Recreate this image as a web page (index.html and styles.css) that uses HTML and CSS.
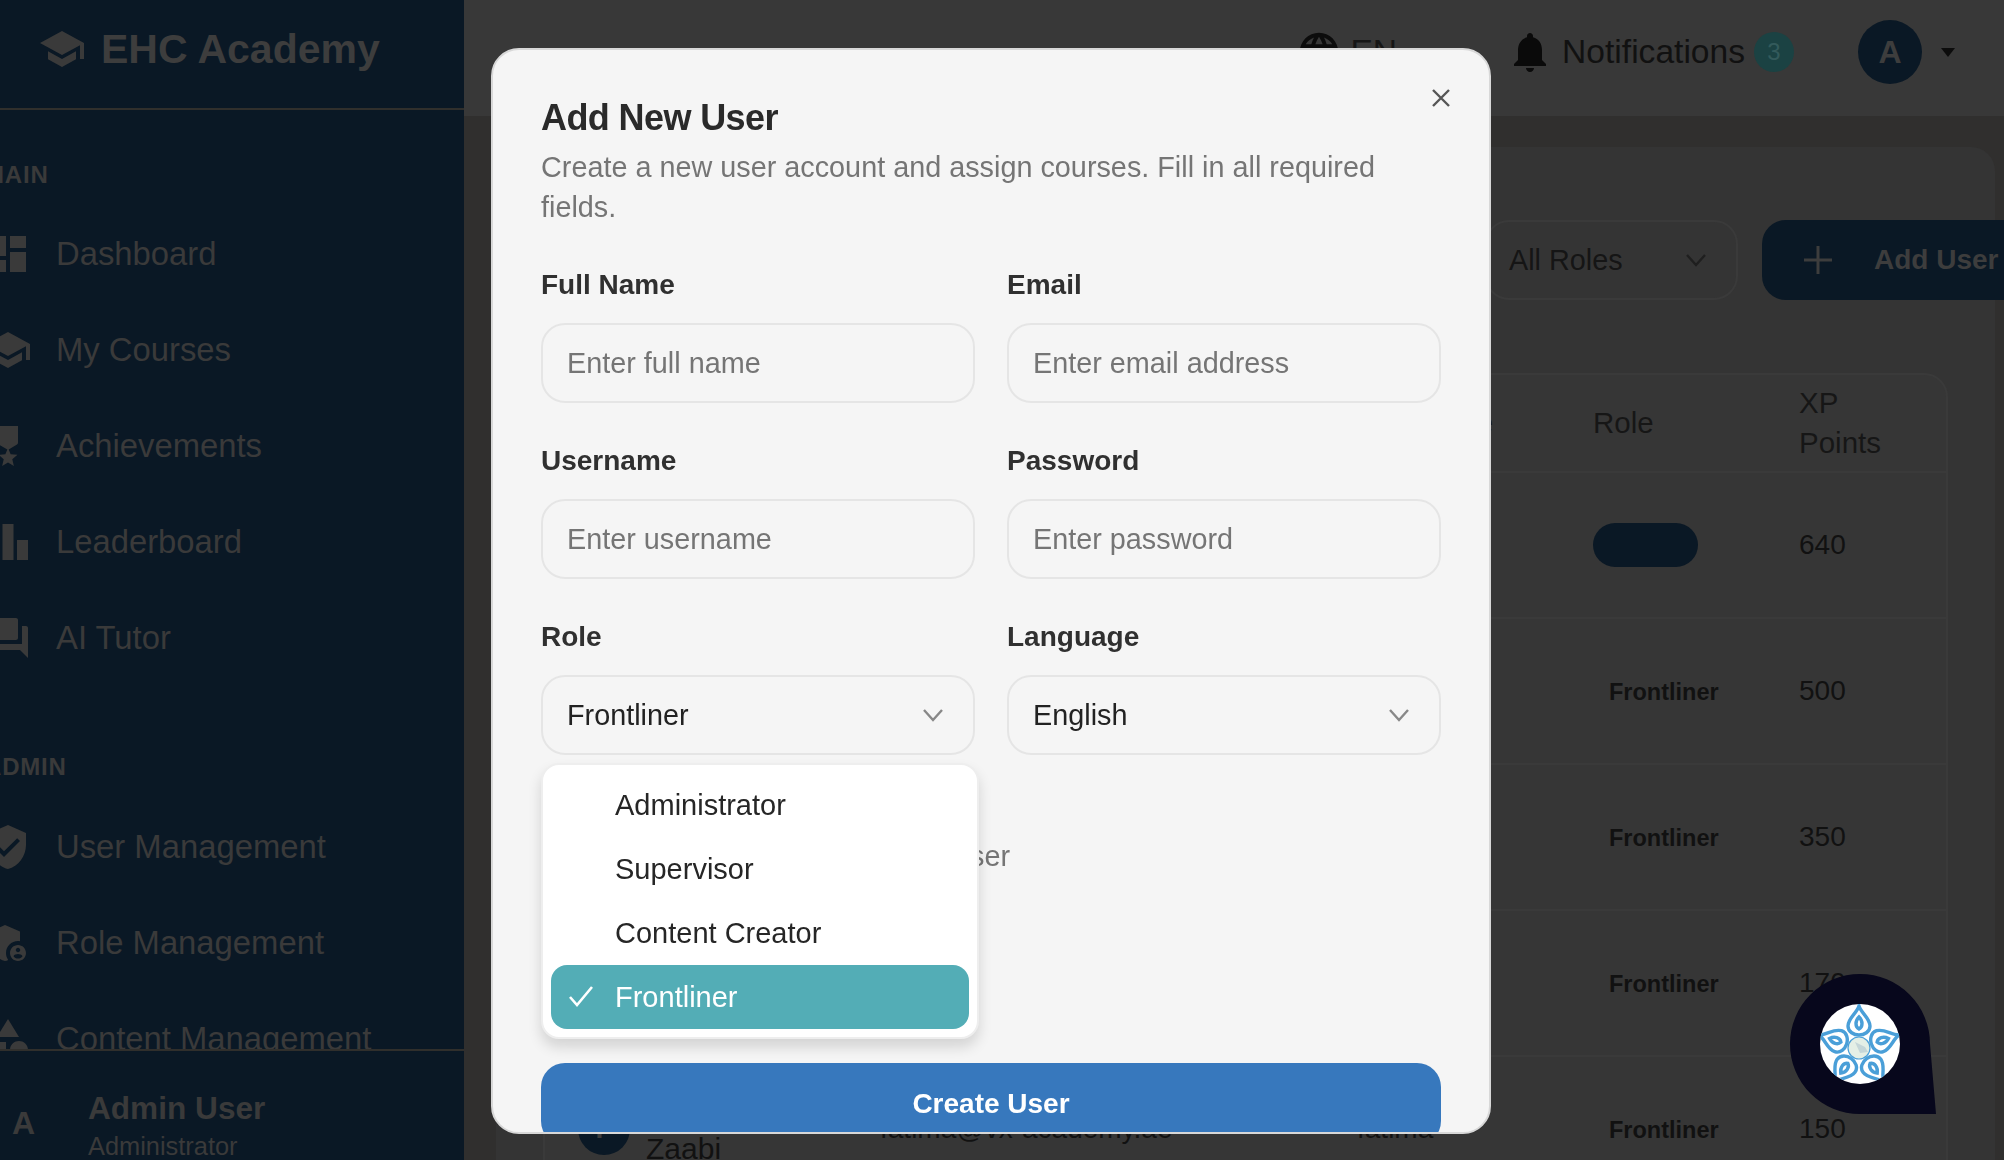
FILE: index.html
```html
<!DOCTYPE html>
<html lang="en">
<head>
<meta charset="UTF-8">
<title>EHC Academy - User Management</title>
<link rel="stylesheet" href="styles.css">
</head>
<body>
<div class="app">
    <aside class="sidebar">
        <div class="brand">
            <svg class="brand-icon" viewBox="0 0 24 24"><path d="M5 13.18v4L12 21l7-3.82v-4L12 17l-7-3.82zM12 3L1 9l11 6 9-4.91V17h2V9L12 3z"/></svg>
            <span>EHC Academy</span>
        </div>
        <nav class="side-nav">
            <div class="nav-title">MAIN</div>
            <a class="nav-item"><svg viewBox="0 0 24 24"><path d="M3 13h8V3H3v10zm0 8h8v-6H3v6zm10 0h8V11h-8v10zm0-18v6h8V3h-8z"/></svg>Dashboard</a>
            <a class="nav-item"><svg viewBox="0 0 24 24"><path d="M5 13.18v4L12 21l7-3.82v-4L12 17l-7-3.82zM12 3L1 9l11 6 9-4.91V17h2V9L12 3z"/></svg>My Courses</a>
            <a class="nav-item"><svg viewBox="0 0 24 24"><path d="M17 10.43V2H7v8.43c0 .35.18.68.49.86l4.18 2.51-.99 2.34-3.41.29 2.59 2.24L9.07 22 12 20.23 14.93 22l-.78-3.33 2.59-2.24-3.41-.29-.99-2.34 4.18-2.51c.3-.18.48-.5.48-.86z"/></svg>Achievements</a>
            <a class="nav-item"><svg viewBox="0 0 24 24"><path d="M7.5 21H2V9h5.5v12zm7.25-18h-5.5v18h5.5V3zM22 11h-5.5v10H22V11z"/></svg>Leaderboard</a>
            <a class="nav-item"><svg viewBox="0 0 24 24"><path d="M21 6h-2v9H6v2c0 .55.45 1 1 1h11l4 4V7c0-.55-.45-1-1-1zm-4 6V3c0-.55-.45-1-1-1H3c-.55 0-1 .45-1 1v14l4-4h10c.55 0 1-.45 1-1z"/></svg>AI Tutor</a>
            <div class="nav-title nav-title-admin">ADMIN</div>
            <a class="nav-item"><svg viewBox="0 0 24 24"><path d="M12 1L3 5v6c0 5.55 3.84 10.74 9 12 5.16-1.26 9-6.45 9-12V5l-9-4zm-2 16l-4-4 1.41-1.41L10 14.17l6.59-6.59L18 9l-8 8z"/></svg>User Management</a>
            <a class="nav-item"><svg viewBox="0 0 24 24"><path d="M17 11c.34 0 .67.04 1 .09V6.27L10.5 3 3 6.27v4.91c0 4.54 3.2 8.79 7.5 9.82.55-.13 1.08-.32 1.6-.55-.69-.98-1.1-2.17-1.1-3.45 0-3.31 2.69-6 6-6z"/><path d="M17 13c-2.21 0-4 1.79-4 4s1.79 4 4 4 4-1.79 4-4-1.79-4-4-4zm0 1.38c.62 0 1.12.51 1.12 1.12s-.51 1.12-1.12 1.12-1.12-.51-1.12-1.12.5-1.12 1.12-1.12zm0 5.37c-.93 0-1.74-.46-2.24-1.17.05-.72 1.51-1.08 2.24-1.08s2.19.36 2.24 1.08c-.5.71-1.31 1.17-2.24 1.17z"/></svg>Role Management</a>
            <a class="nav-item"><svg viewBox="0 0 24 24"><path d="M12 2l-5.5 9h11L12 2zM17.5 13c-2.49 0-4.5 2.01-4.5 4.5s2.01 4.5 4.5 4.5 4.5-2.01 4.5-4.5-2.01-4.5-4.5-4.5zM3 13.5h8v8H3z"/></svg>Content Management</a>
        </nav>
        <div class="side-user">
            <span class="side-avatar">A</span>
            <div>
                <div class="side-name">Admin User</div>
                <div class="side-role">Administrator</div>
            </div>
        </div>
    </aside>

    <main class="main">
        <header class="topbar">
            <div class="lang">
                <svg class="globe" viewBox="0 0 24 24"><path d="M12 2C6.48 2 2 6.48 2 12s4.48 10 10 10 10-4.48 10-10S17.52 2 12 2zm6.93 6h-2.95c-.32-1.25-.78-2.45-1.38-3.56 1.84.63 3.37 1.91 4.33 3.56zM12 4.04c.83 1.2 1.48 2.53 1.91 3.96h-3.82c.43-1.43 1.08-2.76 1.91-3.96zM4.26 14C4.1 13.36 4 12.69 4 12s.1-1.36.26-2h3.38c-.08.66-.14 1.32-.14 2s.06 1.34.14 2H4.26zm.82 2h2.95c.32 1.25.78 2.45 1.38 3.56-1.84-.63-3.37-1.9-4.33-3.56zm2.95-8H5.08c.96-1.66 2.49-2.93 4.33-3.56C8.81 5.55 8.35 6.75 8.03 8zM12 19.96c-.83-1.2-1.48-2.53-1.91-3.96h3.82c-.43 1.43-1.08 2.76-1.91 3.96zM14.34 14H9.66c-.09-.66-.16-1.32-.16-2s.07-1.35.16-2h4.68c.09.65.16 1.32.16 2s-.07 1.34-.16 2zm.25 5.56c.6-1.11 1.06-2.31 1.38-3.56h2.95c-.96 1.65-2.49 2.93-4.33 3.56zM16.36 14c.08-.66.14-1.32.14-2s-.06-1.34-.14-2h3.38c.16.64.26 1.31.26 2s-.1 1.36-.26 2h-3.38z"/></svg>
                <span>EN</span>
            </div>
            <div class="notif">
                <svg class="bell" viewBox="0 0 24 24"><path d="M12 22c1.1 0 2-.9 2-2h-4c0 1.1.9 2 2 2zm6-6v-5c0-3.07-1.63-5.64-4.5-6.32V4c0-.83-.67-1.5-1.5-1.5s-1.5.67-1.5 1.5v.68C7.64 5.36 6 7.92 6 11v5l-2 2v1h16v-1l-2-2z"/></svg>
                <span class="notif-text">Notifications</span>
                <span class="badge">3</span>
            </div>
            <span class="top-avatar">A</span>
            <span class="caret"></span>
        </header>

        <section class="card">
            <div class="filters">
                <div class="search-box"></div>
                <div class="filter-select">
                    <span>All Roles</span>
                    <svg class="chevron" viewBox="0 0 20 20"><path d="M1 5l9 10 9-10"/></svg>
                </div>
                <button class="add-btn">
                    <svg viewBox="0 0 28 28"><path d="M14 0v28M0 14h28"/></svg>
                    <span>Add User</span>
                </button>
            </div>

            <div class="table-wrap">
                <table class="users">
                    <colgroup>
                        <col class="col-user"><col class="col-email"><col class="col-login"><col class="col-role"><col class="col-xp"><col class="col-status">
                    </colgroup>
                    <thead>
                        <tr><th>User</th><th>Email</th><th>Username</th><th>Role</th><th>XP<br>Points</th><th>Status</th></tr>
                    </thead>
                    <tbody>
                        <tr><td></td><td></td><td></td><td><span class="role-pill"></span></td><td class="xp">640</td><td>Active</td></tr>
                        <tr><td></td><td></td><td></td><td><span class="role-text">Frontliner</span></td><td class="xp">500</td><td>Active</td></tr>
                        <tr><td></td><td></td><td></td><td><span class="role-text">Frontliner</span></td><td class="xp">350</td><td>Active</td></tr>
                        <tr><td></td><td></td><td></td><td><span class="role-text">Frontliner</span></td><td class="xp">170</td><td>Active</td></tr>
                        <tr>
                            <td><div class="user-cell"><span class="user-avatar">F</span><span class="user-name">Fatima Al Zaabi</span></div></td>
                            <td>fatima@vx-academy.ae</td>
                            <td>fatima</td>
                            <td><span class="role-text">Frontliner</span></td>
                            <td class="xp">150</td>
                            <td>Active</td>
                        </tr>
                    </tbody>
                </table>
            </div>
        </section>
    </main>
</div>

<div class="chat-bubble">
    <svg viewBox="0 0 146 140" width="146" height="140">
        <defs><clipPath id="logoClip"><circle cx="70" cy="70" r="40"/></clipPath></defs>
        <path class="bubble-shape" d="M70 0A70 70 0 0 1 140 70L146 140H70A70 70 0 0 1 70 0Z"/>
        <circle cx="70" cy="70" r="40" fill="#fff"/>
        <g clip-path="url(#logoClip)">
            <g transform="translate(69 74)">
                <g class="petals">
                    <g id="petal"><path d="M0-42C2-35 11-30 11-22C11-16 5-13 0-13C-5-13-11-16-11-22C-11-30-2-35 0-42Z"/><path d="M0-31C-4-27-4-21 0-19C4-21 4-27 0-31Z"/></g>
                    <use href="#petal" transform="rotate(72)"/>
                    <use href="#petal" transform="rotate(144)"/>
                    <use href="#petal" transform="rotate(216)"/>
                    <use href="#petal" transform="rotate(288)"/>
                </g>
                <circle r="11" fill="#e4efe6" stroke="#4a9fd8" stroke-width="1.2"/>
                <path d="M-4-6L6-1L9 4L1 5Z" fill="#c4d6d8"/>
            </g>
        </g>
    </svg>
</div>

<div class="modal">
    <button class="modal-close"><svg viewBox="0 0 20 20"><path d="M2 2l16 16M18 2L2 18"/></svg></button>
    <h2 class="modal-title">Add New User</h2>
    <p class="modal-desc">Create a new user account and assign courses. Fill in all required fields.</p>

    <form class="form-grid">
        <div class="field">
            <label>Full Name</label>
            <input type="text" placeholder="Enter full name">
        </div>
        <div class="field">
            <label>Email</label>
            <input type="text" placeholder="Enter email address">
        </div>
        <div class="field">
            <label>Username</label>
            <input type="text" placeholder="Enter username">
        </div>
        <div class="field">
            <label>Password</label>
            <input type="text" placeholder="Enter password">
        </div>
        <div class="field">
            <label>Role</label>
            <div class="select-box">
                <span>Frontliner</span>
                <svg class="chevron" viewBox="0 0 20 20"><path d="M1 5l9 10 9-10"/></svg>
            </div>
            <ul class="dropdown">
                <li>Administrator</li>
                <li>Supervisor</li>
                <li>Content Creator</li>
                <li class="selected">
                    <svg class="check" viewBox="0 0 26 22"><path d="M2 12l7 8L24 2"/></svg>
                    Frontliner
                </li>
            </ul>
        </div>
        <div class="field">
            <label>Language</label>
            <div class="select-box">
                <span>English</span>
                <svg class="chevron" viewBox="0 0 20 20"><path d="M1 5l9 10 9-10"/></svg>
            </div>
        </div>
    </form>

    <p class="form-hint">All courses assigned to the new user</p>
    <button class="create-btn">Create User</button>
</div>
</body>
</html>
```

FILE: styles.css
```css
* {
    box-sizing: border-box;
}
html, body {
    height: 100%;
}
body {
    margin: 0;
    overflow: hidden;
    font-family: "Liberation Sans", Arial, sans-serif;
    background: #302f2e;
    color: #111;
}
.app {
    display: flex;
    height: 100vh;
    overflow: hidden;
}

/* sidebar */
.sidebar {
    width: 464px;
    flex: none;
    display: flex;
    flex-direction: column;
    background: #0a1825;
    color: #3a3a3a;
    overflow: hidden;
}
.sidebar svg {
    fill: #3a3a3a;
}
.brand {
    height: 110px;
    flex: none;
    display: flex;
    align-items: center;
    gap: 15px;
    padding: 0 0 10px 38px;
    border-bottom: 2px solid #302f2c;
    font-size: 41px;
    font-weight: bold;
    color: #3d3d3d;
}
.brand-icon {
    width: 48px;
    height: 48px;
}
.side-nav {
    flex: 1;
    min-height: 0;
    overflow: hidden;
    margin-left: -16px;
    padding-top: 51px;
}
.nav-title {
    font-size: 24px;
    font-weight: bold;
    letter-spacing: .8px;
    line-height: 28px;
    margin-bottom: 17px;
}
.nav-title-admin {
    margin-top: 67px;
    margin-bottom: 18px;
}
.nav-item {
    height: 96px;
    display: flex;
    align-items: center;
    gap: 24px;
    font-size: 32.8px;
}
.nav-item svg {
    width: 48px;
    height: 48px;
    flex: none;
}
.side-user {
    height: 111px;
    flex: none;
    display: flex;
    align-items: center;
    border-top: 2px solid #302f2c;
    padding-top: 42px;
}
.side-avatar {
    width: 88px;
    margin-top: -6px;
    padding-left: 12px;
    font-size: 32px;
    font-weight: bold;
}
.side-name {
    font-size: 31.6px;
    line-height: 38px;
    font-weight: bold;
}
.side-role {
    font-size: 25.4px;
    line-height: 38px;
}

/* top bar and page behind the dialog */
.main {
    flex: 1;
    min-width: 0;
}
.topbar {
    height: 116px;
    display: flex;
    justify-content: flex-end;
    align-items: center;
    padding: 20px 49px 32px 0;
    background: #383838;
}
.lang {
    display: flex;
    align-items: center;
    gap: 8px;
    margin-right: 117px;
    font-size: 33.6px;
    color: #161616;
}
.globe {
    width: 46px;
    height: 46px;
    fill: #0c0c0c;
}
.notif {
    display: flex;
    align-items: center;
    margin-right: 64px;
}
.bell {
    width: 48px;
    height: 48px;
    margin: 0 8px 0 -8px;
    fill: #0a0a0a;
}
.notif-text {
    font-size: 33.6px;
    color: #111;
}
.badge {
    width: 40px;
    height: 40px;
    margin-left: 9px;
    border-radius: 50%;
    background: #1b4243;
    color: #335a5b;
    font-size: 24px;
    line-height: 40px;
    text-align: center;
}
.top-avatar {
    width: 64px;
    height: 64px;
    border-radius: 50%;
    background: #0a1825;
    color: #3d3d3d;
    font-size: 32px;
    font-weight: bold;
    line-height: 64px;
    text-align: center;
}
.caret {
    margin-left: 19px;
    border-left: 7px solid transparent;
    border-right: 7px solid transparent;
    border-top: 9px solid #0c0c0c;
}
.card {
    margin: 31px 9px 0 32px;
    height: 1100px;
    padding: 73px 0 0 48px;
    background: #343434;
    border-radius: 24px;
}
.filters {
    display: flex;
    gap: 24px;
    height: 80px;
}
.search-box {
    width: 917px;
    flex: none;
}
.filter-select {
    width: 253px;
    flex: none;
    display: flex;
    align-items: center;
    justify-content: space-between;
    padding: 0 30px 0 22px;
    border: 2px solid #3a3a3a;
    border-radius: 24px;
    font-size: 28.8px;
    color: #151515;
}
.filter-select .chevron {
    stroke: #1f1f1f;
}
.add-btn {
    flex: none;
    width: 290px;
    display: flex;
    align-items: center;
    gap: 42px;
    padding: 0 0 0 42px;
    border: 0;
    border-radius: 24px;
    background: #0a1825;
    color: #3d3d3d;
    font: bold 28px "Liberation Sans", Arial, sans-serif;
}
.add-btn svg {
    width: 28px;
    height: 28px;
    stroke: #3d3d3d;
    stroke-width: 3;
    fill: none;
}
.table-wrap {
    width: 1405px;
    height: 900px;
    margin: 73px 0 0 -1px;
    background: #363636;
    border: 2px solid #3a3a3a;
    border-radius: 24px;
    overflow: hidden;
}
.users {
    width: 1650px;
    table-layout: fixed;
    border-collapse: collapse;
    font-size: 28px;
    color: #111;
}
.col-user { width: 303px; }
.col-email { width: 477px; }
.col-login { width: 236px; }
.col-role { width: 206px; }
.col-xp { width: 150px; }
.col-status { width: 278px; }
.users th {
    height: 97px;
    padding: 0 0 0 32px;
    font-size: 29.5px;
    font-weight: normal;
    line-height: 40px;
    text-align: left;
    color: #161616;
    border-bottom: 2px solid #3a3a3a;
}
.users td {
    height: 146px;
    padding: 0 0 0 32px;
    line-height: 40px;
    border-bottom: 2px solid #3a3a3a;
}
.role-pill {
    display: block;
    width: 105px;
    height: 44px;
    border-radius: 22px;
    background: #0a1825;
}
.role-text {
    padding-left: 16px;
    font-size: 23.5px;
    font-weight: bold;
}
.user-cell {
    display: flex;
    align-items: center;
    gap: 16px;
    margin-left: 1px;
}
.user-avatar {
    width: 52px;
    height: 52px;
    flex: none;
    border-radius: 50%;
    background: #0a1825;
    color: #3d3d3d;
    font-weight: bold;
    line-height: 52px;
    text-align: center;
}
.user-name {
    font-size: 30px;
}

/* floating assistant button */
.chat-bubble {
    position: fixed;
    left: 1790px;
    top: 974px;
    width: 146px;
    height: 140px;
}
.chat-bubble svg {
    display: block;
}
.bubble-shape {
    fill: #07071c;
}
.petals {
    fill: none;
    stroke: #4a9fd8;
    stroke-width: 3.4;
}

/* dialog */
.modal {
    position: fixed;
    left: 491px;
    top: 48px;
    width: 1000px;
    height: 1086px;
    padding: 48px 48px 0;
    background: #f5f5f5;
    border: 2px solid #d8d8d8;
    border-radius: 28px;
    overflow: hidden;
}
.modal-close {
    position: absolute;
    top: 38px;
    right: 38px;
    width: 20px;
    height: 20px;
    padding: 0;
    border: 0;
    background: none;
}
.modal-close svg {
    display: block;
    stroke: #555;
    stroke-width: 2.4;
}
.modal-title {
    margin: 0;
    font-size: 36px;
    line-height: 40px;
    letter-spacing: -.6px;
    color: #2a2a2a;
}
.modal-desc {
    margin: 9px 0 38px;
    font-size: 28.8px;
    line-height: 40px;
    color: #757575;
}
.form-grid {
    display: grid;
    grid-template-columns: 1fr 1fr;
    column-gap: 32px;
    row-gap: 38px;
}
.field {
    position: relative;
}
.field label {
    display: block;
    margin-bottom: 18px;
    font-size: 28px;
    font-weight: bold;
    line-height: 40px;
    color: #303030;
}
.field input, .select-box {
    width: 100%;
    height: 80px;
    padding: 0 24px;
    background: #f5f5f5;
    border: 2px solid #e5e5e5;
    border-radius: 24px;
    font: 28.8px "Liberation Sans", Arial, sans-serif;
    color: #222;
}
.field input::placeholder {
    color: #757575;
    opacity: 1;
}
.select-box {
    display: flex;
    align-items: center;
    justify-content: space-between;
    padding-right: 30px;
}
.chevron {
    width: 20px;
    height: 20px;
    stroke: #888;
    stroke-width: 2.4;
    fill: none;
}
.dropdown {
    position: absolute;
    top: calc(100% + 8px);
    left: 0;
    right: -4px;
    z-index: 2;
    margin: 0;
    padding: 8px;
    list-style: none;
    background: #fff;
    border: 2px solid #eee;
    border-radius: 18px;
    box-shadow: 0 8px 14px rgba(0, 0, 0, .14);
}
.dropdown li {
    position: relative;
    height: 64px;
    padding-left: 64px;
    border-radius: 16px;
    font-size: 29px;
    line-height: 64px;
    color: #262626;
}
.dropdown .selected {
    background: #53adb6;
    color: #fff;
}
.check {
    position: absolute;
    left: 17px;
    top: 20px;
    width: 26px;
    height: 22px;
    stroke: #fff;
    stroke-width: 2.6;
    fill: none;
}
.form-hint {
    margin: 81px 0 0;
    font-size: 28.8px;
    line-height: 40px;
    color: #757575;
}
.create-btn {
    display: block;
    width: 100%;
    height: 82px;
    margin-top: 187px;
    border: 0;
    border-radius: 24px;
    background: #3778bd;
    color: #fff;
    font: bold 28px "Liberation Sans", Arial, sans-serif;
}
```
